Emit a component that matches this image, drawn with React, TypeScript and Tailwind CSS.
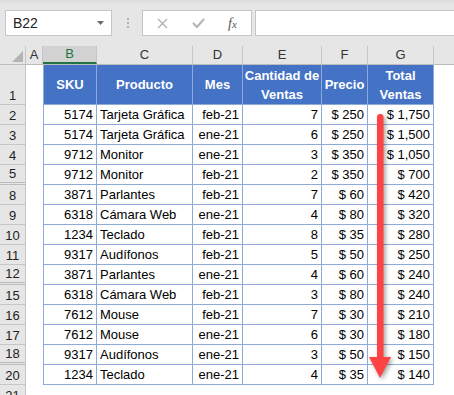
import React from "react";

const font = { fontFamily: '"Liberation Sans", Arial, sans-serif' };

const colHeads = [
  { label: "A", w: "w-[17px]" },
  { label: "B", w: "w-[54px]", selected: true },
  { label: "C", w: "w-[96px]" },
  { label: "D", w: "w-[50px]" },
  { label: "E", w: "w-[79px]" },
  { label: "F", w: "w-[46px]" },
  { label: "G", w: "w-[66px]" },
];

const widths = ["w-[54px]", "w-[96px]", "w-[50px]", "w-[79px]", "w-[46px]", "w-[66px]"];
const aligns = ["justify-end", "justify-start", "justify-end", "justify-end", "justify-end", "justify-end"];

const rows: [string, string, string, string, string, string, string][] = [
  ["2", "5174", "Tarjeta Gráfica", "feb-21", "7", "$ 250", "$ 1,750"],
  ["3", "5174", "Tarjeta Gráfica", "ene-21", "6", "$ 250", "$ 1,500"],
  ["4", "9712", "Monitor", "ene-21", "3", "$ 350", "$ 1,050"],
  ["5", "9712", "Monitor", "feb-21", "2", "$ 350", "$ 700"],
  ["8", "3871", "Parlantes", "feb-21", "7", "$ 60", "$ 420"],
  ["9", "6318", "Cámara Web", "ene-21", "4", "$ 80", "$ 320"],
  ["10", "1234", "Teclado", "feb-21", "8", "$ 35", "$ 280"],
  ["11", "9317", "Audífonos", "feb-21", "5", "$ 50", "$ 250"],
  ["12", "3871", "Parlantes", "ene-21", "4", "$ 60", "$ 240"],
  ["15", "6318", "Cámara Web", "feb-21", "3", "$ 80", "$ 240"],
  ["16", "7612", "Mouse", "feb-21", "7", "$ 30", "$ 210"],
  ["17", "7612", "Mouse", "ene-21", "6", "$ 30", "$ 180"],
  ["18", "9317", "Audífonos", "ene-21", "3", "$ 50", "$ 150"],
  ["20", "1234", "Teclado", "ene-21", "4", "$ 35", "$ 140"],
];

// rows followed by hidden rows get a heavier line in the row header
const hiddenAfter = ["5", "12", "18"];

const headers = ["SKU", "Producto", "Mes", "Cantidad de Ventas", "Precio", "Total Ventas"];

function Toolbar() {
  return (
    <div className="flex h-[46px] items-start bg-gradient-to-b from-[#dcdcdc] to-[#e6e6e6] to-[4px] pt-[10px]">
      <div className="ml-[5px] flex h-[26px] w-[107px] items-center justify-between border border-[#c6c6c6] bg-white pl-[7px] pr-[7px] text-[14px] text-[#222]">
        <span>B22</span>
        <svg width="7" height="4" viewBox="0 0 7 4">
          <path d="M0 0h7L3.5 4z" fill="#6b6b6b" />
        </svg>
      </div>
      <div className="ml-[15px] mt-[8px] flex flex-col gap-[2px]">
        <div className="h-[2px] w-[2px] bg-[#b0b0b0]" />
        <div className="h-[2px] w-[2px] bg-[#b0b0b0]" />
        <div className="h-[2px] w-[2px] bg-[#b0b0b0]" />
      </div>
      <div className="ml-[13px] flex h-[26px] w-[110px] items-center border border-[#c6c6c6] bg-white">
        <svg className="ml-[14px]" width="11" height="11" viewBox="0 0 11 11">
          <path d="M1 1l9 9M10 1l-9 9" stroke="#b3b3b3" strokeWidth="1.4" />
        </svg>
        <svg className="ml-[24px]" width="13" height="10" viewBox="0 0 13 10">
          <path d="M1 5l4 4 7-8" stroke="#b3b3b3" strokeWidth="2" fill="none" />
        </svg>
        <span
          className="ml-[23px] text-[14px] italic text-[#555]"
          style={{ fontFamily: '"Liberation Serif", serif' }}
        >
          f<span className="text-[11px]">x</span>
        </span>
      </div>
      <div className="ml-[3px] h-[26px] flex-1 border border-r-0 border-[#c6c6c6] bg-white" />
    </div>
  );
}

function ColumnHeaders() {
  return (
    <div className="flex h-[19px] border-b border-[#bcbcbc] bg-[#e6e6e6] text-[13px] text-[#333]">
      <div className="relative w-[26px] border-r border-[#c6c6c6]">
        <svg className="absolute bottom-[2px] right-[2px]" width="11" height="11" viewBox="0 0 11 11">
          <path d="M11 0v11H0z" fill="#b4b4b4" />
        </svg>
      </div>
      {colHeads.map((c) =>
        c.selected ? (
          <div
            key={c.label}
            className={`${c.w} flex items-center justify-center border-b-2 border-r border-b-[#217346] border-r-[#c6c6c6] bg-[#d2d2d2] text-[#217346]`}
          >
            {c.label}
          </div>
        ) : (
          <div key={c.label} className={`${c.w} flex items-center justify-center border-r border-[#c6c6c6]`}>
            {c.label}
          </div>
        )
      )}
      <div className="flex-1" />
    </div>
  );
}

function RowHead({ n, tall, heavy }: { n: string; tall?: boolean; heavy?: boolean }) {
  return (
    <div
      className={`flex w-[26px] justify-center border-r border-[#c6c6c6] bg-[#e6e6e6] text-[13px] leading-[17px] text-[#222] ${
        tall ? "items-end border-b" : "items-end"
      } ${heavy ? "border-b-[3px] border-b-[#bcbcbc] border-double" : "border-b border-b-[#c6c6c6]"}`}
    >
      {n}
    </div>
  );
}

function Sheet() {
  return (
    <div className="text-[13px] text-black">
      <div className="flex h-[40px]">
        <RowHead n="1" tall />
        <div className="w-[17px] bg-white" />
        {headers.map((h, i) => (
          <div
            key={h}
            className={`${widths[i]} flex items-center justify-center border-b border-r border-[#8eaadb] bg-[#4472c4] text-center font-bold leading-[19px] text-white ${
              i === 0 ? "border-l" : ""
            }`}
          >
            {h}
          </div>
        ))}
        <div className="flex-1 bg-white" />
      </div>
      {rows.map((r) => (
        <div key={r[0]} className="flex h-[20px]">
          <RowHead n={r[0]} heavy={hiddenAfter.includes(r[0])} />
          <div className="w-[17px] bg-white" />
          {r.slice(1).map((v, i) => (
            <div
              key={i}
              className={`${widths[i]} ${aligns[i]} flex items-end whitespace-nowrap border-b border-r border-[#8eaadb] bg-white px-[3px] leading-[18px] ${
                i === 0 ? "border-l" : ""
              }`}
            >
              {v}
            </div>
          ))}
          <div className="flex-1 bg-white" />
        </div>
      ))}
      <div className="flex h-[20px]">
        <RowHead n="21" />
        <div className="flex-1 bg-white" />
      </div>
    </div>
  );
}

export default function App() {
  return (
    <div className="relative h-[395px] w-[454px] overflow-hidden bg-white" style={font}>
      <Toolbar />
      <ColumnHeaders />
      <Sheet />
      <svg
        className="absolute left-[366px] top-[110px]"
        width="30"
        height="275"
        viewBox="0 0 30 275"
        style={{ filter: "drop-shadow(2px 2px 2px rgba(0,0,0,0.35))" }}
      >
        <rect x="11" y="4" width="6.5" height="248" rx="3.2" fill="#ff4343" />
        <path d="M3 247h22l-11 21z" fill="#ff4343" />
      </svg>
    </div>
  );
}
